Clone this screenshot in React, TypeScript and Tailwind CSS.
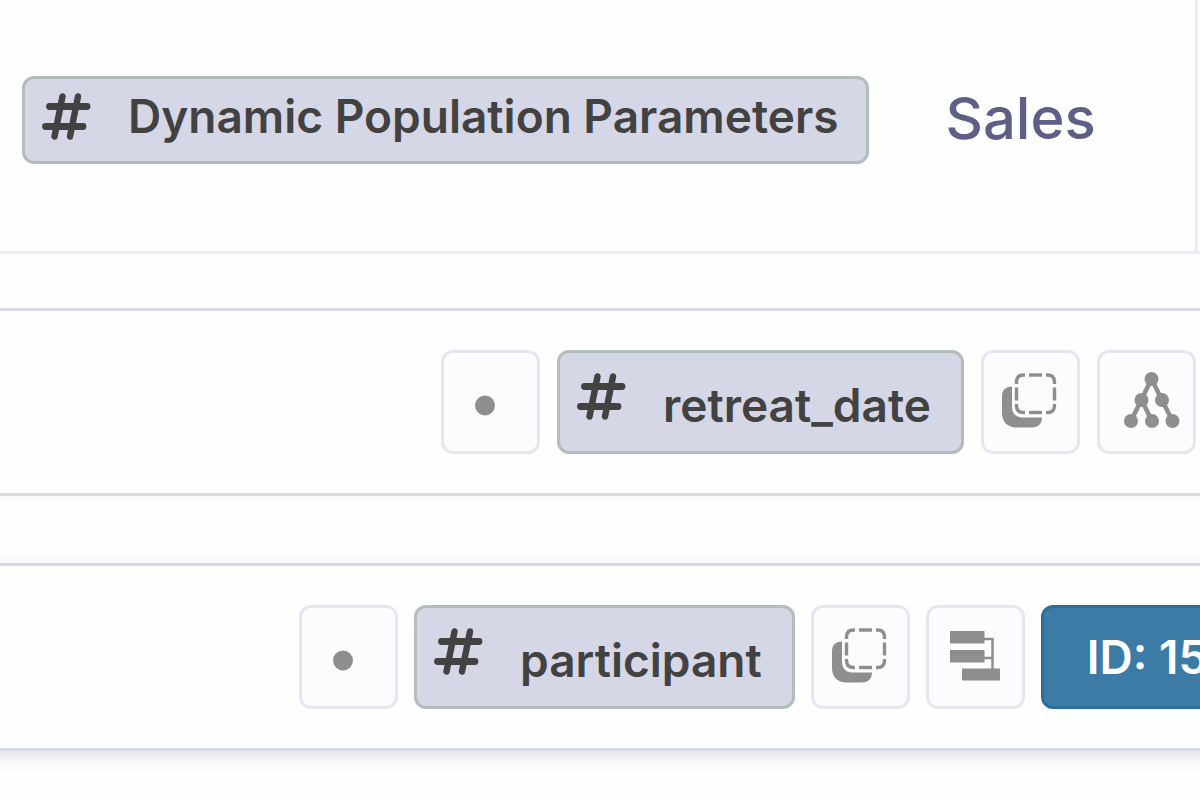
import type { ReactNode } from 'react';

function HashIcon() {
  return (
    <svg viewBox="0 0 49 47" className="h-[47px] w-[49px] shrink-0" fill="none" stroke="#424242" strokeLinecap="round" aria-hidden="true">
      <path d="M20.500 3.500 L12.500 43.500 M36 3.500 L28 43.500" strokeWidth="6.4" />
      <path d="M7.500 13.500 H45 M3.500 33.500 H41" strokeWidth="6.8" />
    </svg>
  );
}

function DotIcon() {
  return (
    <svg viewBox="0 0 93 98" className="h-full w-full" aria-hidden="true">
      <circle cx="41" cy="52.500" r="10" fill="#8e8e8e" />
    </svg>
  );
}

function CopyIcon() {
  return (
    <svg viewBox="0 0 93 98" className="h-full w-full" aria-hidden="true">
      <path d="M28 33.5 C21 34 18 37 18 44 V60 C18 69 24 74.500 32 74.500 H48 C54 74.500 58 71 58 64.500 H38 C32 64.500 28 60 28 54 Z" fill="#8e8e8e" />
      <g fill="none" stroke="#8e8e8e" strokeWidth="3.400" strokeLinecap="butt">
        <path d="M32.500 31 V29 Q32.500 22 39.500 22 H41" />
        <path d="M45 22 H58" />
        <path d="M62 22 H63.500 Q70.500 22 70.500 29 V31" />
        <path d="M70.500 34.500 V47.500" />
        <path d="M70.500 51 V52.500 Q70.500 59.500 63.500 59.500 H62" />
        <path d="M58 59.500 H45" />
        <path d="M41 59.500 H39.500 Q32.500 59.500 32.500 52.500 V51" />
        <path d="M32.500 47.500 V34.500" />
      </g>
    </svg>
  );
}

function TreeIcon() {
  return (
    <svg viewBox="0 0 93 98" className="h-full w-full" fill="#8e8e8e" aria-hidden="true">
      <path d="M51.500 26 L31 68 M51.500 26 L72.500 68 M41.500 47 L52 68" stroke="#8e8e8e" strokeWidth="4.500" />
      <circle cx="51.500" cy="26" r="7" />
      <circle cx="41.500" cy="47" r="7" />
      <circle cx="62" cy="47" r="7" />
      <circle cx="31" cy="68" r="7" />
      <circle cx="52" cy="68" r="7" />
      <circle cx="72.500" cy="68" r="7" />
    </svg>
  );
}

function BarsIcon() {
  return (
    <svg viewBox="0 0 93 98" className="h-full w-full" fill="#8e8e8e" aria-hidden="true">
      <path d="M21 23 H55.500 V35.500 H21 Z M21 42 H55.500 V54.500 H21 Z M33 60.500 H71 V72.500 H33 Z" />
      <path d="M55 31 H63.500 V61 M55 50 H63.500" fill="none" stroke="#8e8e8e" strokeWidth="2.500" />
    </svg>
  );
}

function IconButton({ label, children }: { label: string; children: ReactNode }) {
  return (
    <button
      type="button"
      aria-label={label}
      className="h-[104px] w-[99px] shrink-0 rounded-xl border-[3px] border-[#e6e6f3] bg-[#fbfcfe]"
    >
      {children}
    </button>
  );
}

function RowChip({ children }: { children: ReactNode }) {
  return (
    <button
      type="button"
      className="flex h-[104px] shrink-0 items-start gap-[37px] rounded-xl border-[3px] border-[#b3bdba] bg-[#d5d6e6] pt-5 pr-[30px] pl-[17px] text-[46px] leading-[56px] font-semibold text-[#424242]"
    >
      <HashIcon />
      <span className="pt-1">{children}</span>
    </button>
  );
}

export default function App() {
  return (
    <main className="min-h-screen overflow-hidden bg-[#fefefe] font-['Inter',sans-serif]">
      <header className="flex border-b-[3px] border-[#ececf8] pr-[2px]">
        <div className="flex min-w-0 flex-1 items-center border-r-[3px] border-[#ececf8] pt-[76px] pb-[87px] pl-[22px]">
          <button
            type="button"
            className="flex h-[88px] shrink-0 items-center gap-[37px] rounded-xl border-[3px] border-[#b3bdba] bg-[#d5d6e6] pr-7 pb-2 pl-[17px] text-[46px] leading-[56px] font-semibold text-[#424242]"
          >
            <HashIcon />
            <span>Dynamic Population Parameters</span>
          </button>
          <a href="#sales" className="pb-1 pl-[76px] text-[58px] leading-[72px] font-medium text-[#5d5f85]">
            Sales
          </a>
        </div>
      </header>

      <section className="-mx-4 mt-[54px] flex gap-[17px] border-y-[3px] border-[#d7d8e8] bg-[#fefefe] py-[39px] pl-[457px] shadow-[0_3px_8px_rgba(0,0,0,0.04)]">
        <IconButton label="Marker">
          <DotIcon />
        </IconButton>
        <RowChip>retreat_date</RowChip>
        <IconButton label="Duplicate">
          <CopyIcon />
        </IconButton>
        <IconButton label="Hierarchy">
          <TreeIcon />
        </IconButton>
      </section>

      <section className="-mx-4 mt-[67px] flex gap-4 border-y-[3px] border-[#d7d8e8] bg-[#fefefe] py-[39px] pl-[315px] shadow-[0_5px_14px_rgba(70,70,130,0.16)]">
        <IconButton label="Marker">
          <DotIcon />
        </IconButton>
        <RowChip>participant</RowChip>
        <IconButton label="Duplicate">
          <CopyIcon />
        </IconButton>
        <IconButton label="Dependencies">
          <BarsIcon />
        </IconButton>
        <button
          type="button"
          className="h-[104px] shrink-0 rounded-xl border-[3px] border-[#2b6f9b] bg-[#3d7ba7] px-[43px] text-[46px] leading-[56px] font-semibold text-white"
        >
          ID: 15
        </button>
      </section>
    </main>
  );
}
